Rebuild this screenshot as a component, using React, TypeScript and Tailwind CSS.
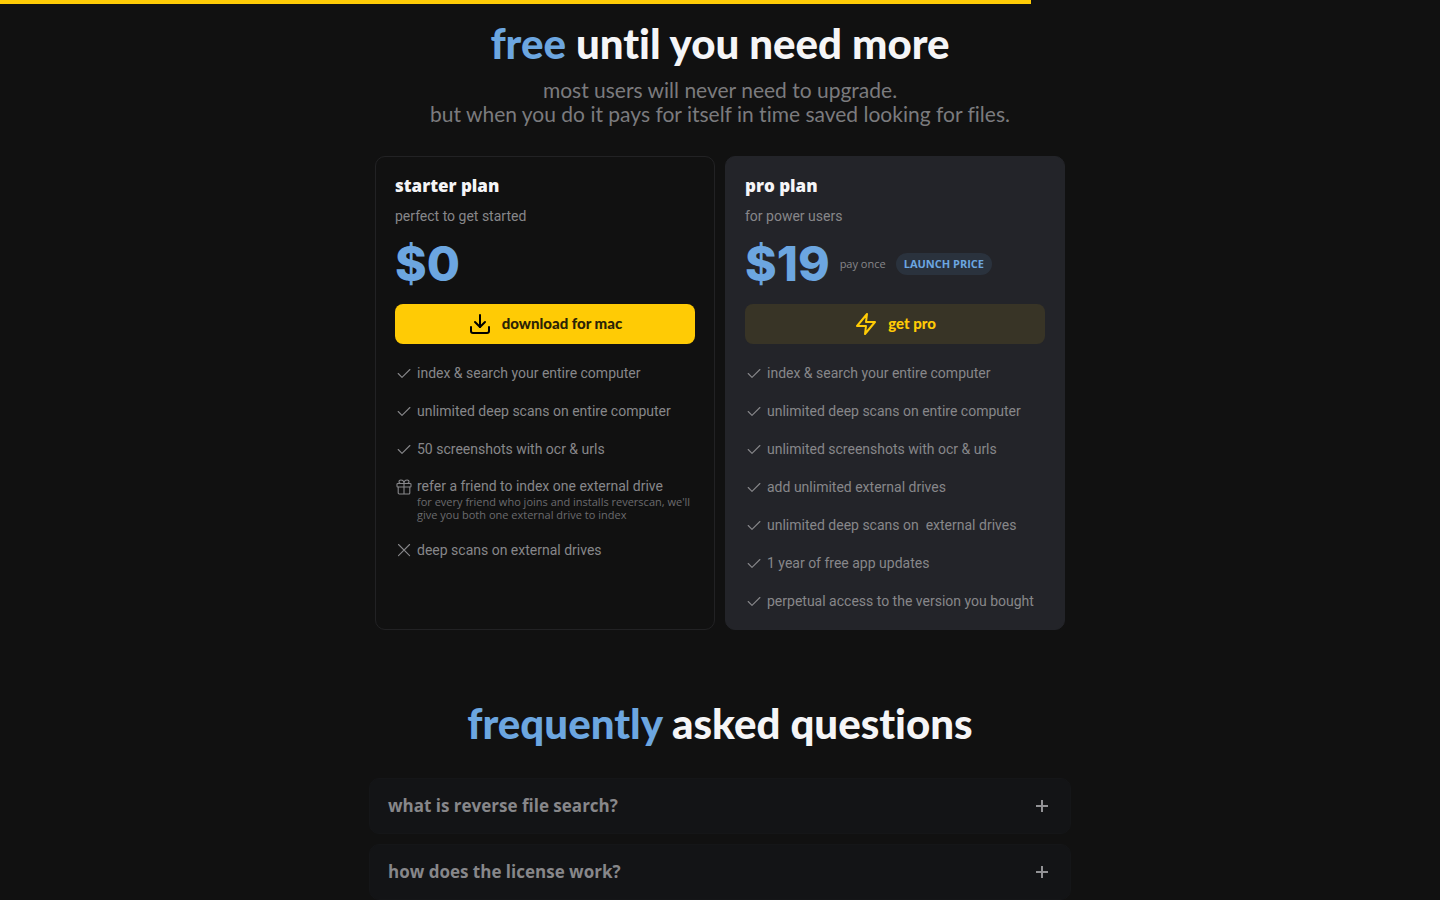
import type { ReactNode } from "react";
import { Download } from "lucide-react";

function CheckIcon() {
  return (
    <svg aria-hidden="true" viewBox="0 0 18 18" className="size-[18px] shrink-0" fill="none" stroke="currentColor" strokeWidth="1.1" strokeLinecap="round" strokeLinejoin="round">
      <path d="M3.2 9.5 7 13.3 14.9 5.5" />
    </svg>
  );
}

function CrossIcon() {
  return (
    <svg aria-hidden="true" viewBox="0 0 18 18" className="size-[18px] shrink-0" fill="none" stroke="currentColor" strokeWidth="1.1" strokeLinecap="round">
      <path d="M3.5 3.5 14.6 14.6M14.6 3.5 3.5 14.6" />
    </svg>
  );
}

function GiftIcon() {
  return (
    <svg aria-hidden="true" viewBox="0 0 18 18" className="size-[18px] shrink-0" fill="none" stroke="currentColor" strokeWidth="1.1" strokeLinecap="round" strokeLinejoin="round">
      <rect x="2" y="5.5" width="14" height="3.5" rx="0.8" />
      <path d="M3.2 9v6a1 1 0 0 0 1 1h9.6a1 1 0 0 0 1-1V9M9 5.5V16" />
      <path d="M9 5.5H6.5C4.6 5.5 4 4.6 4 3.7c0-1 .8-1.7 1.8-1.7C7.8 2 9 3.7 9 5.5ZM9 5.5h2.5c1.9 0 2.5-.9 2.5-1.8 0-1-.8-1.7-1.8-1.7C10.2 2 9 3.7 9 5.5Z" />
    </svg>
  );
}

function BoltIcon() {
  return (
    <svg aria-hidden="true" viewBox="0 0 24 24" className="size-6" fill="none" stroke="currentColor" strokeWidth="2" strokeLinecap="round" strokeLinejoin="round">
      <path d="M13 2 3 14h9l-1 8 10-12h-9l1-8Z" />
    </svg>
  );
}

function Heading({ accent, children }: { accent: string; children: ReactNode }) {
  return (
    <h2 className="text-center text-[42px] leading-12 font-black text-[#f5f5f7]">
      <span className="text-[#6ca6e0]">{accent}</span> {children}
    </h2>
  );
}

function Feature({ icon = <CheckIcon />, note, children }: { icon?: ReactNode; note?: string; children: ReactNode }) {
  return (
    <li className="flex gap-1">
      {icon}
      <div className={note ? "min-w-0 flex-1 pb-px leading-[17px]" : "min-w-0 flex-1 leading-[19px] whitespace-pre-wrap"}>
        {children}
        {note && <p className="font-['Open_Sans',sans-serif] text-[11px] leading-[13px] text-[#6b6b6e]">{note}</p>}
      </div>
    </li>
  );
}

function Question({ children }: { children: string }) {
  return (
    <button
      type="button"
      aria-expanded="false"
      className="flex h-14 w-full items-center justify-between rounded-[10px] border border-[#151618] bg-[#131416] px-[18px] text-left font-['Open_Sans',sans-serif] text-[17px] font-bold text-[#87878a]"
    >
      {children}
      <svg aria-hidden="true" viewBox="0 0 20 20" className="size-5" fill="none" stroke="#929295" strokeWidth="2">
        <path d="M4 10h12M10 4v12" />
      </svg>
    </button>
  );
}

export default function App() {
  return (
    <div className="min-h-screen bg-[#111111] font-[Lato,sans-serif] text-sm text-[#87878a] [font-variant-ligatures:none]">
      <div className="h-1 w-[71.6%] bg-[#ffcc06]" />

      <main className="pt-[15px]">
        <section className="mx-auto flex max-w-[690px] flex-col">
          <Heading accent="free">until you need more</Heading>
          <p className="mt-[11px] text-center text-[21px] leading-6 text-[#7b7b7e]">
            most users will never need to upgrade.
            <br />
            but when you do it pays for itself in time saved looking for files.
          </p>

          <div className="mt-[30px] grid grid-cols-2 gap-2.5">
            <article className="rounded-[10px] border border-[#222224] px-[19px] pt-[19px] pb-[18px] font-[Roboto,sans-serif]">
              <h3 className="font-['Open_Sans',sans-serif] text-[17px] leading-5 font-extrabold text-[#f5f5f7]">starter plan</h3>
              <p className="mt-2.5 leading-5">perfect to get started</p>
              <p className="mt-3 font-[Inter,sans-serif] text-5xl leading-[52px] font-extrabold text-[#6ca6e0]">$0</p>
              <button
                type="button"
                className="mt-3.5 flex h-10 w-full items-center justify-center gap-2.5 rounded-lg bg-[#ffcb05] font-[Lato,sans-serif] text-[15px] font-black text-[#2b2305]"
              >
                <Download aria-hidden="true" className="size-6 text-black" />
                download for mac
              </button>
              <ul className="mt-5 flex flex-col gap-[19px]">
                <Feature>index &amp; search your entire computer</Feature>
                <Feature>unlimited deep scans on entire computer</Feature>
                <Feature>50 screenshots with ocr &amp; urls</Feature>
                <Feature
                  icon={<GiftIcon />}
                  note="for every friend who joins and installs reverscan, we'll give you both one external drive to index"
                >
                  refer a friend to index one external drive
                </Feature>
                <Feature icon={<CrossIcon />}>deep scans on external drives</Feature>
              </ul>
            </article>

            <article className="rounded-[10px] border border-[#232429] bg-[#232429] px-[19px] pt-[19px] pb-[18px] font-[Roboto,sans-serif]">
              <h3 className="font-['Open_Sans',sans-serif] text-[17px] leading-5 font-extrabold text-[#f5f5f7]">pro plan</h3>
              <p className="mt-2.5 leading-5">for power users</p>
              <div className="mt-3 flex items-center gap-2.5 font-['Open_Sans',sans-serif]">
                <p className="font-[Inter,sans-serif] text-5xl leading-[52px] font-extrabold text-[#6ca6e0]">$19</p>
                <span className="text-[11px]">pay once</span>
                <span className="rounded-full bg-[#2a323d] px-2 text-[11px] leading-[22px] font-bold text-[#6ca6e0]">
                  LAUNCH PRICE
                </span>
              </div>
              <button
                type="button"
                className="mt-3.5 flex h-10 w-full items-center justify-center gap-2.5 rounded-lg bg-[#383426] font-[Lato,sans-serif] text-[15px] font-black text-[#ffcb05]"
              >
                <BoltIcon />
                get pro
              </button>
              <ul className="mt-5 flex flex-col gap-[19px]">
                <Feature>index &amp; search your entire computer</Feature>
                <Feature>unlimited deep scans on entire computer</Feature>
                <Feature>unlimited screenshots with ocr &amp; urls</Feature>
                <Feature>add unlimited external drives</Feature>
                <Feature>{"unlimited deep scans on  external drives"}</Feature>
                <Feature>1 year of free app updates</Feature>
                <Feature>perpetual access to the version you bought</Feature>
              </ul>
            </article>
          </div>
        </section>

        <section className="mx-auto mt-[69px] max-w-[702px]">
          <Heading accent="frequently">asked questions</Heading>
          <div className="mt-[31px] flex flex-col gap-2.5">
            <Question>what is reverse file search?</Question>
            <Question>how does the license work?</Question>
          </div>
        </section>
      </main>
    </div>
  );
}
